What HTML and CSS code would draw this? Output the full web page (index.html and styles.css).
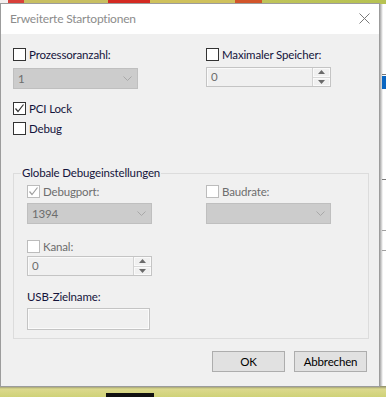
FILE: index.html
```html
<!DOCTYPE html>
<html lang="de">
<head>
  <meta charset="UTF-8" />
  <title>Erweiterte Startoptionen</title>
  <link rel="stylesheet" href="styles.css">
</head>
<body>
  <div class="strip-top"></div>
  <div class="side-window">
    <div class="side-line l1"></div>
    <div class="side-sel"></div>
    <div class="side-line l2"></div>
    <div class="side-line l3"></div>
    <div class="side-line l4"></div>
  </div>
  <div class="taskbar"><div class="task-black"></div></div>

  <div class="dialog">
    <div class="titlebar">
      <span class="title">Erweiterte Startoptionen</span>
      <svg class="close" width="11" height="11" viewBox="0 0 11 11">
        <path d="M0.5 0.5 L10.5 10.5 M10.5 0.5 L0.5 10.5" stroke="#7a7a7a" stroke-width="1" fill="none"/>
      </svg>
    </div>

    <div class="content">
      <div class="cols">
        <div class="col left">
          <label class="check"><span class="box"></span>Prozessoranzahl:</label>
          <div class="combo disabled combo-top"><span>1</span>
            <svg class="chev" width="9" height="5" viewBox="0 0 9 5"><path d="M0.5 0.5 L4.5 4.5 L8.5 0.5" stroke="#a8a8a8" fill="none"/></svg>
          </div>
          <label class="check pci"><span class="box">
            <svg width="11" height="11" viewBox="0 0 11 11"><path d="M1.5 5.5 L4 8.5 L9.5 1.5" stroke="#333" stroke-width="1.2" fill="none"/></svg>
          </span>PCI Lock</label>
          <label class="check debug"><span class="box"></span>Debug</label>
        </div>
        <div class="col right">
          <label class="check"><span class="box"></span>Maximaler Speicher:</label>
          <div class="spin spin-top">
            <span class="spin-val">0</span>
            <div class="spin-btns">
              <span class="sb"><svg width="7" height="4" viewBox="0 0 7 4"><path d="M0 4 L3.5 0 L7 4 Z" fill="#6a6a6a"/></svg></span>
              <span class="sb"><svg width="7" height="4" viewBox="0 0 7 4"><path d="M0 0 L3.5 4 L7 0 Z" fill="#6a6a6a"/></svg></span>
            </div>
          </div>
        </div>
      </div>

      <fieldset class="group">
        <legend>Globale Debugeinstellungen</legend>
        <div class="gcols">
          <div class="col">
            <label class="check off"><span class="box">
              <svg width="11" height="11" viewBox="0 0 11 11"><path d="M1.5 5.5 L4 8.5 L9.5 1.5" stroke="#a0a0a0" stroke-width="1.2" fill="none"/></svg>
            </span>Debugport:</label>
            <div class="combo disabled g-combo"><span>1394</span>
              <svg class="chev" width="9" height="5" viewBox="0 0 9 5"><path d="M0.5 0.5 L4.5 4.5 L8.5 0.5" stroke="#a8a8a8" fill="none"/></svg>
            </div>
            <label class="check off kanal"><span class="box"></span>Kanal:</label>
            <div class="spin g-spin">
              <span class="spin-val">0</span>
              <div class="spin-btns">
                <span class="sb"><svg width="7" height="4" viewBox="0 0 7 4"><path d="M0 4 L3.5 0 L7 4 Z" fill="#6a6a6a"/></svg></span>
                <span class="sb"><svg width="7" height="4" viewBox="0 0 7 4"><path d="M0 0 L3.5 4 L7 0 Z" fill="#6a6a6a"/></svg></span>
              </div>
            </div>
            <div class="usb-label">USB-Zielname:</div>
            <div class="textbox"></div>
          </div>
          <div class="col">
            <label class="check off"><span class="box"></span>Baudrate:</label>
            <div class="combo disabled g-combo"><span></span>
              <svg class="chev" width="9" height="5" viewBox="0 0 9 5"><path d="M0.5 0.5 L4.5 4.5 L8.5 0.5" stroke="#a8a8a8" fill="none"/></svg>
            </div>
          </div>
        </div>
      </fieldset>

      <div class="buttons">
        <button class="btn">OK</button>
        <button class="btn">Abbrechen</button>
      </div>
    </div>
  </div>
</body>
</html>
```

FILE: styles.css
```css
body {
  margin: 0;
  width: 386px;
  height: 397px;
  overflow: hidden;
  position: relative;
  background: #ffffff;
  font-family: Lato, "Noto Sans", sans-serif;
  font-size: 11.5px;
  letter-spacing: -0.15px;
  color: #14143c;
}
.strip-top {
  position: absolute;
  top: 0;
  left: 0;
  width: 386px;
  height: 4px;
  background: linear-gradient(90deg, #f4eeee 0, #f4eeee 8px, #d8403a 8px, #d8403a 24px, #c8bf62 24px, #c8bf62 108px, #d42a22 108px, #d42a22 150px, #cfc15c 150px, #cfc15c 235px, #d2552a 235px, #d2552a 262px, #c0c45a 262px, #b6c252 386px);
}
.side-window {
  position: absolute;
  top: 4px;
  left: 379px;
  width: 7px;
  height: 384px;
  background: linear-gradient(90deg, #8e8e8e 0, #c4c4c4 2px, #ffffff 4px);
}
.side-line {
  position: absolute;
  left: 3px;
  right: 0;
  height: 1px;
  background: #7a7a7a;
}
.l1 { top: 70px; }
.l2 { top: 175px; }
.l3 { top: 226px; background: #a0a0a0; }
.l4 { top: 246px; background: #a0a0a0; }
.side-sel {
  position: absolute;
  top: 72px;
  left: 3px;
  right: 0;
  height: 13px;
  background: #0a66c2;
}
.taskbar {
  position: absolute;
  left: 0;
  top: 386px;
  width: 386px;
  height: 11px;
  background: linear-gradient(180deg, #8a8a6a 0, #dcd98e 3px, #cfd277 11px);
}
.task-black {
  position: absolute;
  left: 106px;
  top: 7px;
  width: 48px;
  height: 4px;
  background: #111;
}

.dialog {
  position: absolute;
  left: 0;
  top: 3px;
  width: 378px;
  height: 382px;
  border: 1px solid #9c9c9c;
  background: #f0f0f0;
  display: flex;
  flex-direction: column;
}
.titlebar {
  height: 30px;
  background: #ffffff;
  display: flex;
  align-items: center;
  justify-content: space-between;
  padding: 0 9px 0 9px;
}
.title {
  font-size: 12px;
  letter-spacing: -0.2px;
  color: #8c8c8c;
  margin-top: -1px;
}
.close {
  display: block;
  margin-top: -1px;
}
.content {
  padding: 14px 10px 0 12px;
  display: flex;
  flex-direction: column;
}
.cols {
  display: grid;
  grid-template-columns: 193px 1fr;
}
.col {
  display: flex;
  flex-direction: column;
  align-items: flex-start;
}
.check {
  display: flex;
  align-items: center;
  height: 13px;
  gap: 3px;
  white-space: nowrap;
}
.box {
  width: 11px;
  height: 11px;
  border: 1px solid #333333;
  background: #ffffff;
  display: flex;
  align-items: center;
  justify-content: center;
}
.box svg { display: block; }
.check.off { color: #6d6d6d; }
.check.off .box {
  border-color: #bcbcbc;
  background: #ffffff;
}
.pci { margin-top: 13px; }
.debug { margin-top: 7px; }

.combo {
  width: 114px;
  height: 19px;
  border: 1px solid #bfbfbf;
  background: #cccccc;
  color: #6d6d6d;
  display: flex;
  align-items: center;
  justify-content: space-between;
  padding: 0 5px 0 4px;
}
.combo-top { margin-top: 7px; }
.chev { display: block; }

.spin {
  width: 123px;
  height: 18px;
  border: 1px solid #c4c4c4;
  background: #f0f0f0;
  box-shadow: inset 1px 1px 0 #fafafa;
  display: flex;
  justify-content: space-between;
  color: #6d6d6d;
}
.spin-top { margin-top: 6px; }
.spin-val {
  padding-left: 4px;
  line-height: 18px;
}
.spin-btns {
  width: 17px;
  display: flex;
  flex-direction: column;
  border-left: 1px solid #d2d2d2;
}
.sb {
  flex: 1;
  display: flex;
  align-items: center;
  justify-content: center;
  background: #f0f0f0;
  box-shadow: inset 0 0 0 1px #fafafa;
}
.sb + .sb { border-top: 1px solid #d8d8d8; }
.sb svg { display: block; }

.group {
  margin: 30px 0 0 0;
  padding: 4px 0 8px 13px;
  border: 1px solid #dcdcdc;
  min-width: 0;
}
.group legend {
  padding: 0 1px;
  margin-left: -6px;
  line-height: 16px;
}
.gcols {
  display: grid;
  grid-template-columns: 179px 1fr;
}
.g-combo { margin-top: 5px; }
.kanal { margin-top: 16px; }
.g-spin { margin-top: 3px; }
.usb-label {
  margin-top: 13px;
  line-height: 16px;
}
.textbox {
  margin-top: 3px;
  width: 121px;
  height: 20px;
  border: 1px solid #c4c4c4;
  background: #f0f0f0;
  box-shadow: inset 0 0 0 1px #fbfbfb;
}

.buttons {
  display: flex;
  justify-content: flex-end;
  gap: 9px;
  margin-top: 12px;
  padding-right: 2px;
}
.btn {
  width: 73px;
  height: 21px;
  border: 1px solid #adadad;
  background: #e1e1e1;
  font-family: inherit;
  font-size: 11.5px;
  letter-spacing: -0.15px;
  color: #000;
  padding: 0;
}
```
